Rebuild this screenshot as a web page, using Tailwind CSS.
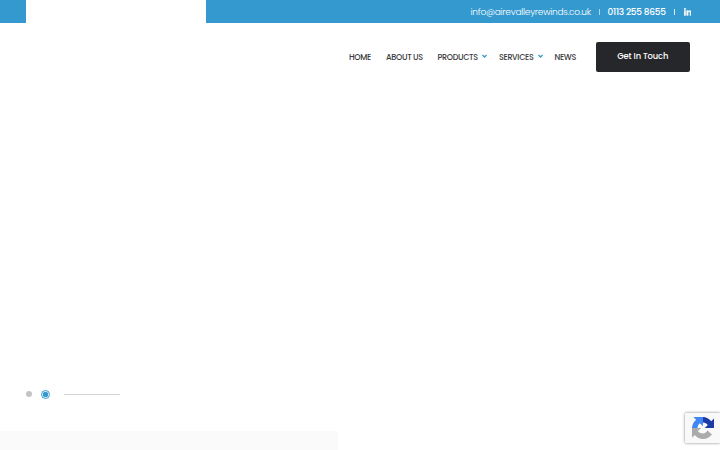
<!DOCTYPE html>
<html lang="en">
<head>
    <meta charset="UTF-8">
    <meta name="viewport" content="width=device-width, initial-scale=1.0">
    <title>Aire Valley Rewinds</title>
    <script src="https://cdn.jsdelivr.net/npm/@tailwindcss/browser@4"></script>
</head>
<body class="h-screen overflow-hidden bg-white font-['Poppins','Inter',sans-serif] text-[#26272b]">
    <div class="relative flex h-screen flex-col overflow-hidden">

        <!-- Top bar -->
        <div class="flex h-[23px] shrink-0 bg-[#3399cf] pl-[25.5px] text-white">
            <div class="w-[180px] bg-white"></div>
            <div class="ml-auto flex h-[23px] items-center pt-px pr-[29px] text-[9px] leading-none whitespace-nowrap">
                <a href="mailto:info@airevalleyrewinds.co.uk" class="w-[120.5px] font-light tracking-[-0.25px]">info@airevalleyrewinds.co.uk</a>
                <span class="ml-[7.5px] h-[6px] w-px bg-white/60"></span>
                <a href="tel:01132558655" class="ml-[8px] w-[59px] font-medium tracking-[-0.27px]">0113 255 8655</a>
                <span class="ml-[7.5px] h-[6px] w-px bg-white/80"></span>
                <a href="#" aria-label="LinkedIn" class="ml-[8.5px]">
                    <svg class="h-[7.5px] w-[7.5px]" viewBox="0 0 448 448" fill="currentColor" stroke="currentColor" stroke-width="20">
                        <path d="M100 448H7V149h93zM54 108C24 108 0 83 0 54a54 54 0 0 1 108 0c0 29-25 54-54 54zM448 448h-93V302c0-35-1-79-48-79-49 0-56 38-56 77v148h-93V149h89v41h1c13-24 43-48 88-48 94 0 112 62 112 142z"/>
                    </svg>
                </a>
            </div>
        </div>

        <!-- Navigation -->
        <header class="flex h-[67px] shrink-0 items-center justify-end pr-[30px] leading-none font-medium whitespace-nowrap">
            <nav class="flex items-center pt-[2px] text-[8px] tracking-[-0.32px] text-[#3a3b3f]">
                <a href="#" class="w-[37px]">HOME</a>
                <a href="#" class="w-[51.5px]">ABOUT US</a>
                <a href="#" class="flex w-[61.5px] items-center">
                    <span class="w-[44.5px]">PRODUCTS</span>
                    <svg class="mb-[3px] h-[4px] w-[5px]" viewBox="0 0 10 8" fill="none" stroke="#3399cf" stroke-width="2.6"><path d="M1 2l4 4 4-4"/></svg>
                </a>
                <a href="#" class="flex w-[55.5px] items-center">
                    <span class="w-[39px]">SERVICES</span>
                    <svg class="mb-[3px] h-[4px] w-[5px]" viewBox="0 0 10 8" fill="none" stroke="#3399cf" stroke-width="2.6"><path d="M1 2l4 4 4-4"/></svg>
                </a>
                <a href="#" class="w-[41px]">NEWS</a>
            </nav>
            <a href="#" class="flex h-[30px] w-[94.5px] items-center justify-center rounded-[2px] bg-[#26272b] text-[8.4px] tracking-[-0.15px] text-white">Get In Touch</a>
        </header>

        <!-- Slider pagination -->
        <section class="flex h-[341px] shrink-0 items-end pb-[32.5px] pl-[26px]">
            <div class="flex h-[9px] items-center">
                <span class="h-[5.5px] w-[5.5px] rounded-full bg-[#c3c3c3]"></span>
                <span class="ml-[9.5px]">
                    <svg class="h-[9px] w-[9px] text-[#3399cf]" viewBox="0 0 18 18">
                        <circle cx="9" cy="9" r="8" fill="none" stroke="currentColor" stroke-width="2"/>
                        <circle cx="9" cy="9" r="5.4" fill="currentColor"/>
                    </svg>
                </span>
                <span class="ml-[14px] h-px w-[56px] bg-[#d5d5d5]"></span>
            </div>
        </section>

        <div class="-mt-[0.5px] w-[338px] grow bg-[#fafafa]"></div>

        <!-- reCAPTCHA badge -->
        <div class="absolute top-[413px] right-0 h-[30px] w-[35px] rounded-l-[1px] bg-[#f9f9f9] pt-[4px] pl-[7px] shadow-[0_0_3px_#808080]">
            <svg class="h-[22px] w-[22px]" viewBox="0 0 64 64">
                <path fill="#1c3aa9" d="M64 32V4l-8 8C50 5 41 0 32 0v16c6 0 11 3 14 7l-9 9z"/>
                <path fill="#4285f4" d="M32 0H4l8 8C5 14 0 23 0 32h16c0-6 3-11 7-14l9 9z"/>
                <path fill="#ababab" d="M0 32v28l8-8c6 7 15 12 24 12 11 0 20-5 26-13L45 39c-3 5-8 9-14 9-6 0-11-3-14-7l10-9z"/>
            </svg>
        </div>
    </div>
</body>
</html>
